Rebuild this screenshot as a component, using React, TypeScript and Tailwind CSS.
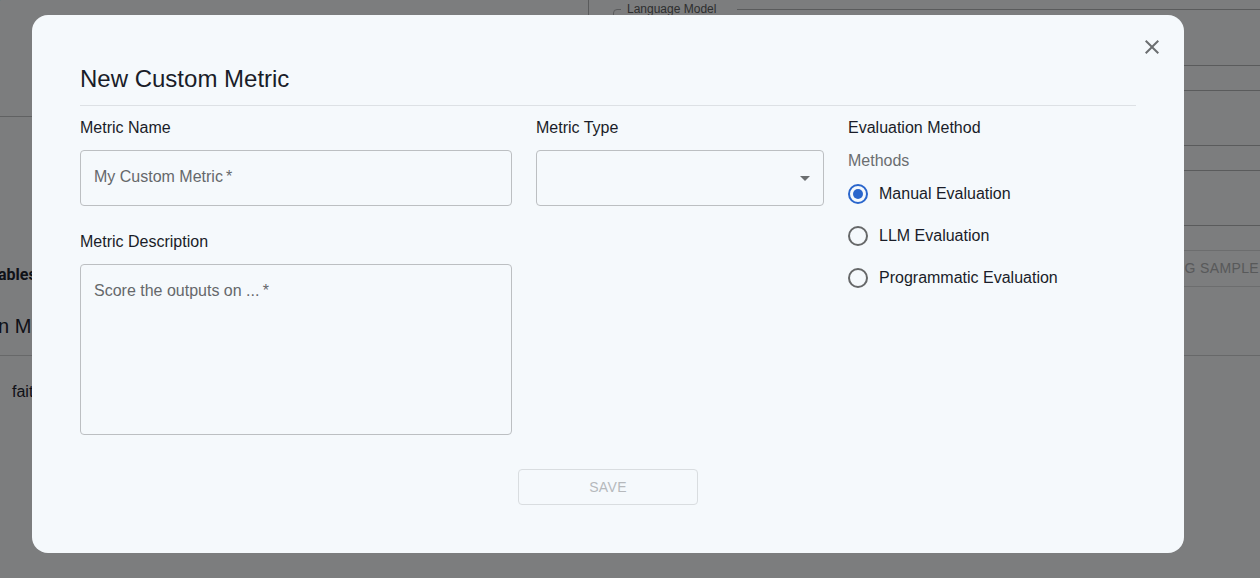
import { useState } from "react";

const methods = ["Manual Evaluation", "LLM Evaluation", "Programmatic Evaluation"];

function EvaluatePage() {
  return (
    <main className="min-h-screen overflow-hidden bg-[#f8fafc] text-[#1f2430]">
      <div className="flex h-[355px]">
        <section className="w-[588px] shrink-0">
          <div className="flex h-[117px] border-b border-[#c0c2c4]">
            <p className="-mt-4 -ml-1 leading-6">)</p>
          </div>
          <p className="mt-[146px] -ml-0.5 font-[Roboto] text-base leading-6 font-bold">ables</p>
          <h2 className="mt-[25px] -ml-0.5 text-xl leading-7">n M</h2>
        </section>
        <section className="-mr-6 flex grow flex-col border-l border-[#b4b6b8] pl-6">
          <fieldset className="h-[66px] shrink-0 rounded border border-[#b4b6b8] pl-[7px]">
            <legend className="h-[18px] w-[116px] px-1.5 text-xs leading-[18px] text-[#5c5e60]">
              Language Model
            </legend>
          </fieldset>
          <div className="mt-6 h-14 shrink-0 rounded border border-[#b4b6b8]" />
          <div className="mt-6 h-14 shrink-0 rounded border border-[#b4b6b8]" />
          <button
            type="button"
            disabled
            className="mt-6 h-[37px] shrink-0 rounded border border-[#d8dadc] pr-6 pb-0.5 text-right text-sm tracking-wide whitespace-nowrap text-[#b0b2b4]"
          >
            NG SAMPLE
          </button>
        </section>
      </div>
      <div className="border-t border-[#cfd1d3] px-3 pt-6">
        <p className="text-base leading-6">fait</p>
      </div>
    </main>
  );
}

function MetricDialog() {
  const [method, setMethod] = useState(methods[0]);
  const fieldClass =
    "block w-full rounded border border-[#bcbfc2] bg-transparent px-[13px] text-base text-[#1f2430] placeholder:text-[#65686b] placeholder:opacity-100 focus:outline-[#2a66cc]";

  return (
    <div
      role="dialog"
      aria-modal="true"
      aria-labelledby="dialog-title"
      className="relative w-full max-w-6xl rounded-2xl bg-[#f5f9fc] p-12 text-[#1a1d29]"
    >
      <button
        type="button"
        aria-label="Close"
        className="absolute top-5 right-5 size-6 text-[#6b6e70]"
      >
        <svg viewBox="0 0 24 24" className="size-6" fill="currentColor">
          <path d="M19 6.41 17.59 5 12 10.59 6.41 5 5 6.41 10.59 12 5 17.59 6.41 19 12 13.41 17.59 19 19 17.59 13.41 12z" />
        </svg>
      </button>
      <h1 id="dialog-title" className="border-b border-[#dde1e5] pb-2.5 text-2xl leading-8">
        New Custom Metric
      </h1>
      <form onSubmit={(e) => e.preventDefault()}>
        <div className="mt-2.5 grid grid-cols-[3fr_2fr_2fr] gap-6">
          <div>
            <label htmlFor="metric-name" className="block leading-6">
              Metric Name
            </label>
            <input
              id="metric-name"
              required
              placeholder={"My Custom Metric\u2009*"}
              className={`${fieldClass} mt-2.5 h-14 pb-0.5`}
            />
            <label htmlFor="metric-description" className="mt-6 block leading-6">
              Metric Description
            </label>
            <textarea
              id="metric-description"
              required
              placeholder={"Score the outputs on ...\u2009*"}
              className={`${fieldClass} mt-2.5 h-[171px] resize-none py-3.5 leading-6`}
            />
          </div>
          <div>
            <label htmlFor="metric-type" className="block leading-6">
              Metric Type
            </label>
            <div className="relative mt-2.5">
              <select id="metric-type" className={`${fieldClass} h-14 appearance-none`}>
                <option value=""></option>
              </select>
              <svg
                viewBox="0 0 24 24"
                className="pointer-events-none absolute top-4 right-[7px] size-6 text-[#6b6e70]"
                fill="currentColor"
              >
                <path d="m7 10 5 5 5-5z" />
              </svg>
            </div>
          </div>
          <div>
            <h2 className="leading-6">Evaluation Method</h2>
            <fieldset className="mt-[9px]">
              <legend className="block leading-6 text-[#6b6e70]">Methods</legend>
              {methods.map((name) => (
                <label key={name} className="flex h-[42px] items-center gap-[11px]">
                  <input
                    type="radio"
                    name="method"
                    checked={method === name}
                    onChange={() => setMethod(name)}
                    className="size-5 appearance-none rounded-full border-2 border-[#666869] bg-clip-content p-[3px] checked:border-[#2a66cc] checked:bg-[#2a66cc]"
                  />
                  {name}
                </label>
              ))}
            </fieldset>
          </div>
        </div>
        <div className="mt-[34px] flex justify-center">
          <button
            type="submit"
            disabled
            className="h-9 w-[180px] rounded border border-[#d9dde0] text-sm tracking-wide text-[#b6b9bc]"
          >
            SAVE
          </button>
        </div>
      </form>
    </div>
  );
}

export default function App() {
  return (
    <div className="relative font-['Liberation_Sans',Arial,sans-serif]">
      <EvaluatePage />
      <div className="absolute inset-0 flex items-start bg-black/50 px-8 pt-[15px]">
        <MetricDialog />
      </div>
    </div>
  );
}
